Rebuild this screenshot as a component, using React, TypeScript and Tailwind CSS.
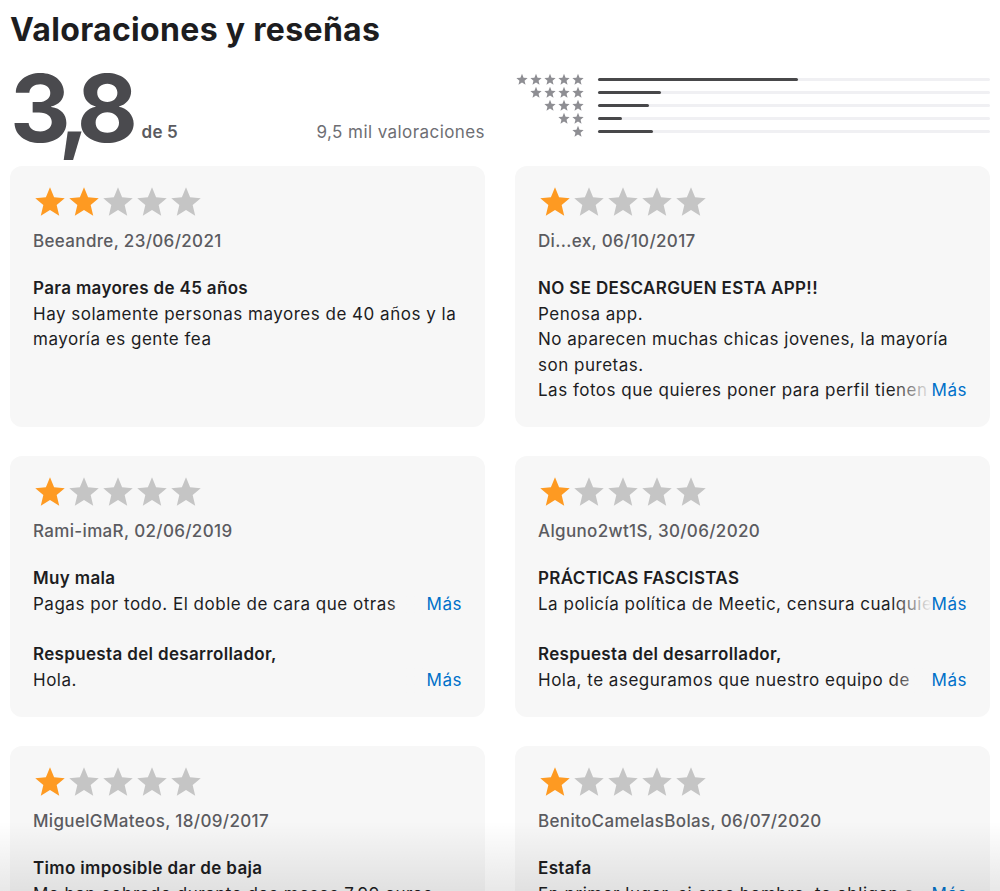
import React from 'react';

type Review = {
  stars: number;
  user: string;
  title: string;
  body: string[];
  more?: boolean;
  reply?: string;
};

const reviews: Review[] = [
  {
    stars: 2,
    user: 'Beeandre, 23/06/2021',
    title: 'Para mayores de 45 años',
    body: ['Hay solamente personas mayores de 40 años y la', 'mayoría es gente fea'],
  },
  {
    stars: 1,
    user: 'Di...ex, 06/10/2017',
    title: 'NO SE DESCARGUEN ESTA APP!!',
    body: [
      'Penosa app.',
      'No aparecen muchas chicas jovenes, la mayoría',
      'son puretas.',
      'Las fotos que quieres poner para perfil tienen',
    ],
    more: true,
  },
  {
    stars: 1,
    user: 'Rami-imaR, 02/06/2019',
    title: 'Muy mala',
    body: ['Pagas por todo. El doble de cara que otras'],
    more: true,
    reply: 'Hola.',
  },
  {
    stars: 1,
    user: 'Alguno2wt1S, 30/06/2020',
    title: 'PRÁCTICAS FASCISTAS',
    body: ['La policía política de Meetic, censura cualquie'],
    more: true,
    reply: 'Hola, te aseguramos que nuestro equipo de',
  },
  {
    stars: 1,
    user: 'MiguelGMateos, 18/09/2017',
    title: 'Timo imposible dar de baja',
    body: ['Me han cobrado durante dos meses 7,99 euros'],
  },
  {
    stars: 1,
    user: 'BenitoCamelasBolas, 06/07/2020',
    title: 'Estafa',
    body: ['En primer lugar, si eres hombre, te obligan a'],
    more: true,
  },
];

const histogram = [51, 16, 13, 6, 14];

const Star = ({ className }: { className: string }) => (
  <svg viewBox="0 0 24 24" className={className}>
    <polygon points="12,1.6 14.9,8.7 22.4,9.3 16.7,14.2 18.5,21.7 12,17.7 5.5,21.7 7.3,14.2 1.6,9.3 9.1,8.7" fill="currentColor" />
  </svg>
);

// last line of a clamped text, with the fade and the "Más" link
const MoreLine = ({ text }: { text: string }) => (
  <div className="flex">
    <span className="relative flex-1 min-w-0 overflow-hidden whitespace-nowrap">
      {text}
      <span className="absolute right-0 top-0 h-full w-10 bg-gradient-to-r from-transparent to-[#f7f7f7]" />
    </span>
    <span className="shrink-0 text-[#0070c9]">Más</span>
  </div>
);

const ReviewCard = ({ r }: { r: Review }) => (
  <div className="h-[261px] rounded-xl bg-[#f7f7f7] px-[23px] pt-[19px]">
    <div className="flex">
      {[0, 1, 2, 3, 4].map((i) => (
        <Star key={i} className={`h-[34px] w-[34px] ${i < r.stars ? 'text-[#fe9a22]' : 'text-[#c5c5c5]'}`} />
      ))}
    </div>
    <p className="mt-[10px] text-[17px] leading-[24px] font-medium tracking-[0.02em] text-[#5b5b60]">{r.user}</p>
    <div className="mt-[23px] text-[17px] leading-[25.5px] tracking-[0.03em] text-[#1d1d1f]">
      <p className="font-semibold tracking-[0.02em]">{r.title}</p>
      {r.body.map((line, i) =>
        r.more && i === r.body.length - 1 ? (
          <MoreLine key={i} text={line} />
        ) : (
          <p key={i} className="whitespace-nowrap">{line}</p>
        ),
      )}
      {r.reply && (
        <div className="mt-[25px]">
          <p className="font-semibold tracking-[0.02em]">Respuesta del desarrollador,</p>
          <MoreLine text={r.reply} />
        </div>
      )}
    </div>
  </div>
);

export default function App() {
  return (
    <div
      className="relative h-[891px] w-[1000px] overflow-hidden bg-white px-[10px]"
      style={{ fontFamily: 'Inter, "Noto Sans", sans-serif' }}
    >
      <h2 className="pt-[11px] text-[32px] leading-[38px] font-bold text-[#1d1d1f] tracking-[0.01em]">
        Valoraciones y reseñas
      </h2>

      <div className="mt-[17px] grid h-[84px] grid-cols-2 gap-x-[30px]">
        <div className="flex items-end justify-between">
          <div className="flex items-end">
            <span className="text-[94px] leading-[84px] font-bold text-[#4a4a4e] tracking-[-0.11em]">3,8</span>
            <span className="ml-[14px] mb-[8px] text-[17px] leading-[20px] font-semibold tracking-[0.01em] text-[#5b5b60]">de 5</span>
          </div>
          <span className="mb-[8px] text-[17px] leading-[20px] tracking-[0.025em] text-[#6e6e73]">9,5 mil valoraciones</span>
        </div>
        <div className="flex flex-col pt-[7px]">
          {histogram.map((pct, i) => (
            <div key={i} className="flex h-[13px] items-center">
              <div className="flex w-[70px] justify-end">
                {Array.from({ length: 5 - i }).map((_, k) => (
                  <Star key={k} className="h-[13px] w-[14px] text-[#8e8e93]" />
                ))}
              </div>
              <div className="ml-[13px] h-[3px] flex-1 rounded-full bg-[#f0f0f3]">
                <div className="h-[3px] rounded-full bg-[#48484a]" style={{ width: `${pct}%` }} />
              </div>
            </div>
          ))}
        </div>
      </div>

      <div className="mt-[16px] grid grid-cols-2 gap-x-[30px] gap-y-[29px]">
        {reviews.map((r, i) => (
          <ReviewCard key={i} r={r} />
        ))}
      </div>

      <div className="pointer-events-none absolute inset-x-0 bottom-0 h-[70px] bg-gradient-to-b from-transparent to-black/[0.09]" />
    </div>
  );
}
